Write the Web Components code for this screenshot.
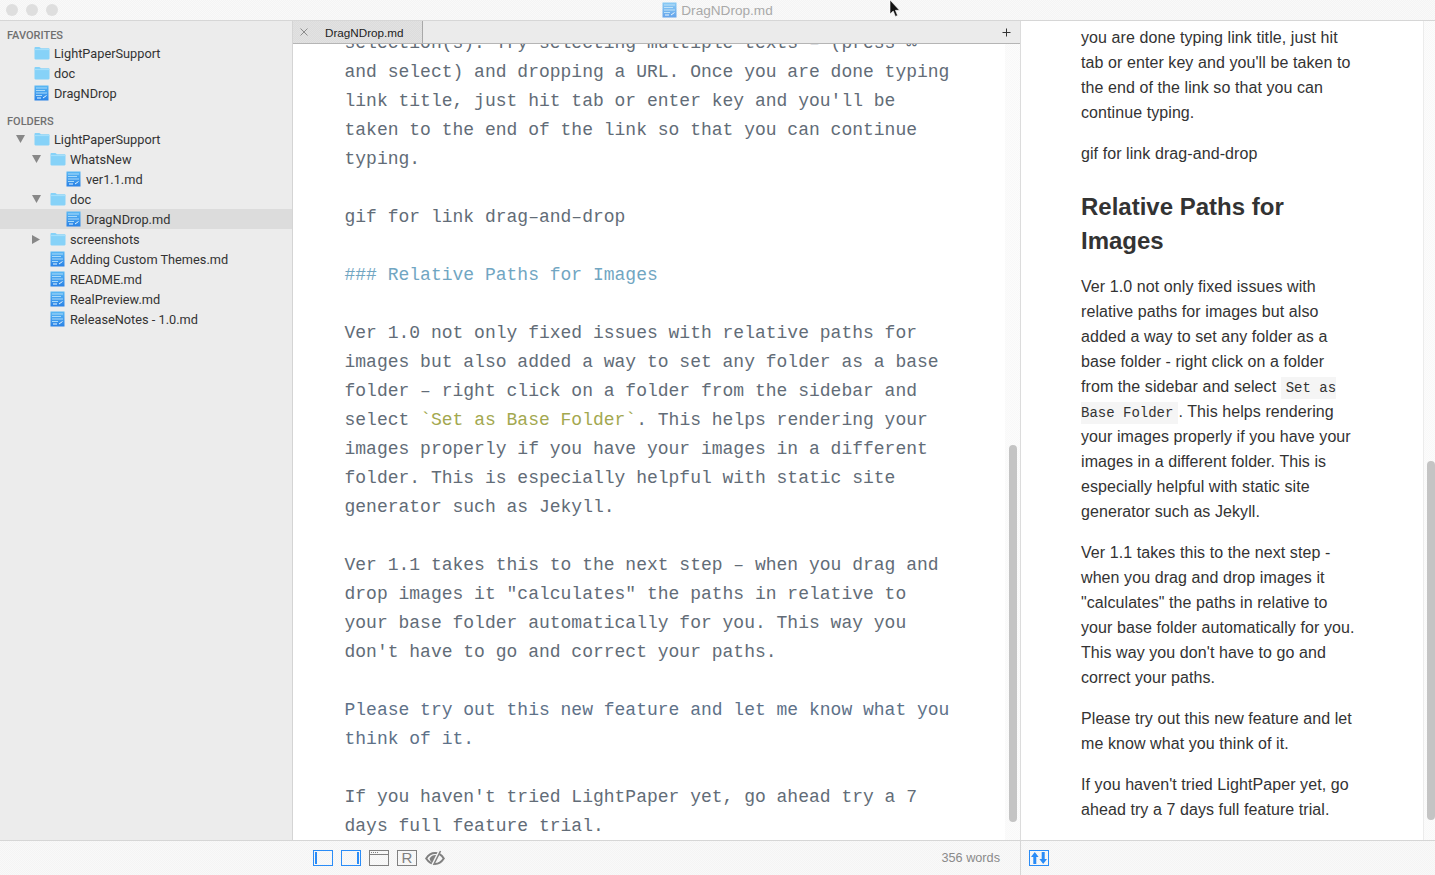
<!DOCTYPE html>
<html>
<head>
<meta charset="utf-8">
<title>LightPaper</title>
<style>
  html, body { margin: 0; padding: 0; height: 100%; overflow: hidden; background: #fff; }
  body { font-family: "Liberation Sans", Arial, sans-serif; }
</style>
</head>
<body>
<lp-window>
  <lp-titlebar slot="title">DragNDrop.md</lp-titlebar>

  <lp-sidebar slot="sidebar">
    <lp-section-title>FAVORITES</lp-section-title>
    <lp-row icon="folder">LightPaperSupport</lp-row>
    <lp-row icon="folder">doc</lp-row>
    <lp-row icon="file">DragNDrop</lp-row>
    <lp-section-title second>FOLDERS</lp-section-title>
    <lp-row icon="folder" arrow="open">LightPaperSupport</lp-row>
    <lp-row icon="folder" arrow="open" depth="1">WhatsNew</lp-row>
    <lp-row icon="file" depth="2">ver1.1.md</lp-row>
    <lp-row icon="folder" arrow="open" depth="1">doc</lp-row>
    <lp-row icon="file" depth="2" selected>DragNDrop.md</lp-row>
    <lp-row icon="folder" arrow="closed" depth="1">screenshots</lp-row>
    <lp-row icon="file" depth="1">Adding Custom Themes.md</lp-row>
    <lp-row icon="file" depth="1">README.md</lp-row>
    <lp-row icon="file" depth="1">RealPreview.md</lp-row>
    <lp-row icon="file" depth="1">ReleaseNotes - 1.0.md</lp-row>
  </lp-sidebar>

  <lp-tabbar slot="tabs">DragNDrop.md</lp-tabbar>

  <lp-editor slot="editor">
    <p>selection(s). Try selecting multiple texts – (press <b>⌘</b>
and select) and dropping a URL. Once you are done typing link title, just hit tab or enter key and you'll be taken to the end of the link so that you can continue typing.</p>
    <p>gif for link drag–and–drop</p>
    <p class="head">### Relative Paths for Images</p>
    <p>Ver 1.0 not only fixed issues with relative paths for images but also added a way to set any folder as a base folder – right click on a folder from the sidebar and select <lp-md-code>`Set as Base Folder`</lp-md-code>. This helps rendering your images properly if you have your images in a different folder. This is especially helpful with static site generator such as Jekyll.</p>
    <p>Ver 1.1 takes this to the next step – when you drag and drop images it "calculates" the paths in relative to your base folder automatically for you. This way you don't have to go and correct your paths.</p>
    <p class="blue">Please try out this new feature and let me know what you think of it.</p>
    <p>If you haven't tried LightPaper yet, go ahead try a 7 days full feature trial.</p>
  </lp-editor>

  <lp-preview slot="preview">
    <p>you are done typing link title, just hit tab or enter key and you'll be taken to the end of the link so that you can continue typing.</p>
    <p>gif for link drag-and-drop</p>
    <h3>Relative Paths for Images</h3>
    <p>Ver 1.0 not only fixed issues with relative paths for images but also added a way to set any folder as a base folder - right click on a folder from the sidebar and select <lp-inline-code>Set as Base Folder</lp-inline-code>. This helps rendering your images properly if you have your images in a different folder. This is especially helpful with static site generator such as Jekyll.</p>
    <p>Ver 1.1 takes this to the next step - when you drag and drop images it "calculates" the paths in relative to your base folder automatically for you. This way you don't have to go and correct your paths.</p>
    <p>Please try out this new feature and let me know what you think of it.</p>
    <p>If you haven't tried LightPaper yet, go ahead try a 7 days full feature trial.</p>
  </lp-preview>

  <lp-statusbar slot="status"></lp-statusbar>
</lp-window>

<script>
// iconos compartidos
const FOLDER_SVG = `<svg width="16" height="14" viewBox="0 0 16 14"><path d="M0.500 2.200c0-.7.4-1.200 1-1.200h3.600c.5 0 .8.2 1.100.6l.6.7h7.700c.6 0 1 .4 1 1v9c0 .7-.4 1.200-1 1.200H1.500c-.6 0-1-.5-1-1.200z" fill="#86d2f8"/><path d="M0.500 3.600h15" stroke="#a8e0fa" stroke-width="1"/></svg>`;
const FILE_SVG = `<svg width="15" height="16" viewBox="0 0 15 16"><defs><linearGradient id="g" x1="0" y1="0" x2="0" y2="1"><stop offset="0" stop-color="#5ab8f4"/><stop offset="1" stop-color="#2a82e6"/></linearGradient></defs><rect x="0.500" y="0.500" width="14" height="15" fill="url(#g)"/><path d="M2 3h11M2 5.500h9M2 8h11M2 10.500h6" stroke="#a9daf9" stroke-width="1"/><path d="M9 13l3.500-2.500M3 13h4" stroke="#e8f6ff" stroke-width="1"/></svg>`;

class LpWindow extends HTMLElement {
  constructor() {
    super();
    this.attachShadow({ mode: "open" });
    this.shadowRoot.innerHTML = `
      <style>
        :host { display: flex; flex-direction: column; width: 1435px; height: 875px; position: relative; overflow: hidden; }
        .main { flex: 1; min-height: 0; display: flex; }
        .left { width: 728px; flex: none; box-sizing: border-box; display: flex; flex-direction: column; border-right: 1px solid #dcdcdc; min-height: 0; }
        .right { flex: 1; min-width: 0; display: flex; min-height: 0; }
        .cursor { position: absolute; left: 889px; top: 0; }
      </style>
      <slot name="title"></slot>
      <div class="main">
        <slot name="sidebar"></slot>
        <div class="left">
          <slot name="tabs"></slot>
          <slot name="editor"></slot>
        </div>
        <div class="right"><slot name="preview"></slot></div>
      </div>
      <slot name="status"></slot>
      <svg class="cursor" width="12" height="18" viewBox="0 0 12 18"><path d="M1 0v14l3.200-3 2.200 5.400 2.200-.9-2.200-5.200H10.500z" fill="#111" stroke="#fff" stroke-width=".6"/></svg>
    `;
  }
}

class LpTitlebar extends HTMLElement {
  constructor() {
    super();
    this.attachShadow({ mode: "open" });
    this.shadowRoot.innerHTML = `
      <style>
        :host { display: block; height: 20px; border-bottom: 1px solid #d6d6d6; position: relative;
          background: repeating-conic-gradient(#f4f4f4 0 25%, #f9f9f9 0 50%) 0 0 / 2px 2px; }
        .lights { position: absolute; left: 6px; top: 4px; display: flex; gap: 8px; }
        .lights i { width: 12px; height: 12px; border-radius: 50%; background: #dedede; display: block; }
        .name { height: 20px; display: flex; align-items: center; justify-content: center; gap: 4px;
          font: 13.600px "Liberation Sans", Arial, sans-serif; color: #a9a9a9; }
        .name svg { opacity: .7; }
      </style>
      <div class="lights"><i></i><i></i><i></i></div>
      <div class="name">${FILE_SVG}<span><slot></slot></span></div>
    `;
  }
}

class LpSidebar extends HTMLElement {
  constructor() {
    super();
    this.attachShadow({ mode: "open" });
    this.shadowRoot.innerHTML = `
      <style>
        :host { display: block; width: 292px; flex: none; background: #ececec; border-right: 1px solid #d4d4d4; padding-top: 4px; }
      </style>
      <slot></slot>
    `;
  }
}

class LpSectionTitle extends HTMLElement {
  constructor() {
    super();
    this.attachShadow({ mode: "open" });
    this.shadowRoot.innerHTML = `
      <style>
        :host { display: block; height: 18px; padding-left: 7px; font: 500 11px/22px Roboto, "Liberation Sans", sans-serif; color: #707070; }
        :host([second]) { margin-top: 8px; }
      </style>
      <slot></slot>
    `;
  }
}

class LpRow extends HTMLElement {
  constructor() {
    super();
    this.attachShadow({ mode: "open" });
  }
  connectedCallback() {
    const depth = Number(this.getAttribute("depth") || 0);
    const arrow = this.getAttribute("arrow");
    const icon = this.getAttribute("icon") === "folder" ? FOLDER_SVG : FILE_SVG;
    let flecha = "";
    if (arrow === "open") flecha = `<svg width="9" height="8" viewBox="0 0 9 8"><path d="M0 0h9L4.500 8z" fill="#888"/></svg>`;
    if (arrow === "closed") flecha = `<svg width="8" height="9" viewBox="0 0 8 9"><path d="M0 0v9l8-4.500z" fill="#888"/></svg>`;
    this.shadowRoot.innerHTML = `
      <style>
        :host { display: flex; align-items: center; height: 20px; font: 12.750px Roboto, "Liberation Sans", sans-serif; color: #333; padding-left: ${14 + depth * 16}px; }
        :host([selected]) { background: #dcdcdc; }
        .arrow { width: 18px; padding-left: 2px; display: flex; align-items: center; height: 20px; }
        .icon { width: 20px; height: 16px; display: flex; align-items: center; }
      </style>
      <span class="arrow">${flecha}</span>
      <span class="icon">${icon}</span>
      <slot></slot>
    `;
  }
}

class LpTabbar extends HTMLElement {
  constructor() {
    super();
    this.attachShadow({ mode: "open" });
    this.shadowRoot.innerHTML = `
      <style>
        :host { display: flex; height: 22px; flex: none; background: #ebebeb; border-bottom: 1px solid #b5b5b5; font: 11.700px "Liberation Sans", Arial, sans-serif; color: #222; }
        .tab { width: 129px; display: flex; align-items: center; border-right: 1px solid #a8a8a8;
          background: repeating-conic-gradient(#dcdcdc 0 25%, #e2e2e2 0 50%) 0 0 / 2px 2px; }
        .close { width: 32px; padding-left: 7px; box-sizing: border-box; display: flex; }
        .grow { flex: 1; }
        .plus { width: 18px; display: flex; align-items: center; }
      </style>
      <div class="tab">
        <span class="close"><svg width="8" height="8" viewBox="0 0 8 8"><path d="M.5.5l7 7M7.500.5l-7 7" stroke="#8c8c8c" fill="none"/></svg></span>
        <slot></slot>
      </div>
      <div class="grow"></div>
      <div class="plus"><svg width="9" height="9" viewBox="0 0 9 9"><path d="M4.500.5v8M.5 4.500h8" stroke="#333" fill="none"/></svg></div>
    `;
  }
}

class LpEditor extends HTMLElement {
  constructor() {
    super();
    this.attachShadow({ mode: "open" });
    this.shadowRoot.innerHTML = `
      <style>
        :host { display: flex; flex: 1; min-height: 0; background: #fff; overflow: hidden; }
        .text { flex: 1; min-width: 0; overflow: hidden; padding-left: 51.500px; }
        .inner { width: 606px; margin-top: -15px; }
        ::slotted(p) { margin: 0 0 29px; font: 18px/29px "Liberation Mono", monospace; color: #626c77; white-space: pre-wrap; }
        ::slotted(p.head) { color: #71a6c2; }
        ::slotted(p.blue) { color: #5e7188; }
        .track { width: 15px; flex: none; padding: 401px 3px 0 4px; box-sizing: border-box;
          background: repeating-conic-gradient(#f8f8f8 0 25%, #fcfcfc 0 50%) 0 0 / 2px 2px; }
        .thumb { height: 377px; width: 8px; border-radius: 4px; background: #c4c4c4; }
      </style>
      <div class="text"><div class="inner"><slot></slot></div></div>
      <div class="track"><div class="thumb"></div></div>
    `;
  }
}

class LpMdCode extends HTMLElement {
  constructor() {
    super();
    this.attachShadow({ mode: "open" });
    this.shadowRoot.innerHTML = `<style>:host { display: inline; color: #a3a84f; }</style><slot></slot>`;
  }
}

class LpInlineCode extends HTMLElement {
  constructor() {
    super();
    this.attachShadow({ mode: "open" });
    // sin espacios alrededor del slot: se verían como un carácter más dentro de la línea
    this.shadowRoot.innerHTML = `<style>:host { display: inline; padding: 3px 5px; background: #f5f5f5; font: 14px "Liberation Mono", monospace; letter-spacing: 0; }</style><slot></slot>`;
  }
}

class LpPreview extends HTMLElement {
  constructor() {
    super();
    this.attachShadow({ mode: "open" });
    this.shadowRoot.innerHTML = `
      <style>
        :host { display: flex; flex: 1; min-width: 0; background: #fff; overflow: hidden; }
        .text { flex: 1; min-width: 0; overflow: hidden; padding: 4px 0 0 60px; }
        .inner { width: 276px; }
        ::slotted(p) { margin: 0 0 16px; font: 16px/25px "Liberation Sans", Arial, sans-serif; letter-spacing: .08px; color: #333; }
        ::slotted(h3) { margin: 24px 0 16px; font: bold 24px/34px "Liberation Sans", Arial, sans-serif; color: #333; }
        .track { width: 12px; flex: none; border-left: 1px solid #ececec; padding: 440px 0 0 3px; box-sizing: border-box;
          background: repeating-conic-gradient(#f8f8f8 0 25%, #fcfcfc 0 50%) 0 0 / 2px 2px; }
        .thumb { height: 359px; width: 8px; border-radius: 4px; background: #c4c4c4; }
      </style>
      <div class="text"><div class="inner"><slot></slot></div></div>
      <div class="track"><div class="thumb"></div></div>
    `;
  }
}

class LpStatusbar extends HTMLElement {
  constructor() {
    super();
    this.attachShadow({ mode: "open" });
    this.shadowRoot.innerHTML = `
      <style>
        :host { display: flex; height: 34px; flex: none; border-top: 1px solid #d6d6d6;
          background: repeating-conic-gradient(#f4f4f4 0 25%, #f9f9f9 0 50%) 0 0 / 2px 2px; }
        .left { width: 1021px; box-sizing: border-box; display: flex; align-items: center; padding: 0 20px 0 313px; gap: 8px; border-right: 1px solid #d6d6d6; }
        .grow { flex: 1; }
        .words { font: 12.700px "Liberation Sans", Arial, sans-serif; color: #8a8a8a; }
        .right { display: flex; align-items: center; padding-left: 8px; }
        svg { display: block; }
        .r { width: 18px; height: 14px; border: 1px solid #808080; display: flex; align-items: center; justify-content: center;
          font: 15px/14px "Liberation Sans", Arial, sans-serif; color: #808080; }
      </style>
      <div class="left">
        <svg width="20" height="16" viewBox="0 0 20 16"><rect x=".5" y=".5" width="19" height="15" fill="none" stroke="#2a8cf7"/><rect x="2" y="2" width="2" height="12" fill="#2a8cf7"/></svg>
        <svg width="20" height="16" viewBox="0 0 20 16"><rect x=".5" y=".5" width="19" height="15" fill="none" stroke="#2a8cf7"/><rect x="16" y="2" width="2" height="12" fill="#2a8cf7"/></svg>
        <svg width="20" height="16" viewBox="0 0 20 16"><rect x=".5" y=".5" width="19" height="15" fill="none" stroke="#808080"/><path d="M1 4.500h18" stroke="#808080"/><path d="M2 2.500h1M4 2.500h1M6 2.500h1M8 2.500h1" stroke="#808080"/></svg>
        <div class="r">R</div>
        <svg width="20" height="16" viewBox="0 0 20 16"><path d="M1.200 8.500C3.500 4.800 6.500 3 10 3s6.500 1.800 8.800 5.500C16.500 12 13.500 14 10 14s-6.500-2-8.800-5.500z" fill="none" stroke="#808080" stroke-width="2"/><path d="M4.500 8.500C6 6 8 5 10.500 5l2 .5L8 13c-1.500-.5-2.500-1.500-3.500-4.500z" fill="#808080"/><path d="M14.500 1L7.500 15" stroke="#f6f6f6" stroke-width="2.500"/><path d="M15.500 1L8.500 15" stroke="#808080" stroke-width="1.500"/></svg>
        <div class="grow"></div>
        <span class="words">356 words</span>
      </div>
      <div class="right">
        <svg width="20" height="16" viewBox="0 0 20 16"><rect x=".5" y=".5" width="19" height="15" fill="none" stroke="#2a8cf7"/><path d="M5.800 2L2 7H4.300V14H7.300V7H9.600zM14.200 14L10.400 9H12.700V2H15.700V9H18z" fill="#2a8cf7"/></svg>
      </div>
    `;
  }
}

customElements.define("lp-window", LpWindow);
customElements.define("lp-titlebar", LpTitlebar);
customElements.define("lp-sidebar", LpSidebar);
customElements.define("lp-section-title", LpSectionTitle);
customElements.define("lp-row", LpRow);
customElements.define("lp-tabbar", LpTabbar);
customElements.define("lp-editor", LpEditor);
customElements.define("lp-md-code", LpMdCode);
customElements.define("lp-inline-code", LpInlineCode);
customElements.define("lp-preview", LpPreview);
customElements.define("lp-statusbar", LpStatusbar);
</script>
</body>
</html>
